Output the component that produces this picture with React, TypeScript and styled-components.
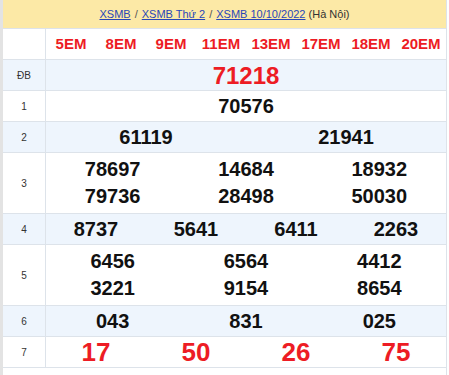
import styled, { createGlobalStyle } from 'styled-components';

const GlobalStyle = createGlobalStyle`
    html, body {
        margin: 0;
        padding: 0;
        background: #fff;
    }
    body {
        font-family: "Liberation Sans", Arial, sans-serif;
    }
`;

const Frame = styled.div`
    width: 443px;
    height: 375px;
    border-left: 3px solid #e3e3e3;
    border-right: 1px solid #dde3ea;
    background: #fff;
`;

const Crumbs = styled.div`
    height: 28px;
    background: #fce9a6;
    display: flex;
    align-items: center;
    justify-content: center;
    font-size: 11px;
    color: #333;
    gap: 4px;
`;

const CrumbLink = styled.a`
    color: #2946b8;
    text-decoration: underline;
`;

const Sep = styled.span`
    color: #555;
`;

const Row = styled.div<{ $alt?: boolean; $tall?: boolean }>`
    display: grid;
    grid-template-columns: 43px 1fr;
    height: ${(p) => (p.$tall ? 60 : 30)}px;
    border-top: 1px solid #dde3ea;
    background: ${(p) => (p.$alt ? '#eef5fd' : '#fff')};
    &:last-child {
        border-bottom: 1px solid #dde3ea;
    }
`;

const Label = styled.div`
    border-right: 1px solid #dde3ea;
    display: flex;
    align-items: center;
    justify-content: center;
    font-size: 10px;
    color: #333;
`;

const Cells = styled.div<{ $cols: number }>`
    display: grid;
    grid-template-columns: repeat(${(p) => p.$cols}, 1fr);
    align-content: center;
`;

const Head = styled.div`
    text-align: center;
    color: #ed1c24;
    font-weight: bold;
    font-size: 15px;
    line-height: 30px;
`;

const Num = styled.div<{ $red?: boolean; $size?: number }>`
    text-align: center;
    font-weight: bold;
    color: ${(p) => (p.$red ? '#ed1c24' : '#111')};
    font-size: ${(p) => p.$size ?? 20}px;
    line-height: 27px;
`;

const heads = ['5EM', '8EM', '9EM', '11EM', '13EM', '17EM', '18EM', '20EM'];

const prizes: { label: string; cols: number; nums: string[]; red?: boolean; size?: number }[] = [
    { label: 'ĐB', cols: 1, nums: ['71218'], red: true, size: 24 },
    { label: '1', cols: 1, nums: ['70576'] },
    { label: '2', cols: 2, nums: ['61119', '21941'] },
    { label: '3', cols: 3, nums: ['78697', '14684', '18932', '79736', '28498', '50030'] },
    { label: '4', cols: 4, nums: ['8737', '5641', '6411', '2263'] },
    { label: '5', cols: 3, nums: ['6456', '6564', '4412', '3221', '9154', '8654'] },
    { label: '6', cols: 3, nums: ['043', '831', '025'] },
    { label: '7', cols: 4, nums: ['17', '50', '26', '75'], red: true, size: 26 },
];

export default function App() {
    return (
        <Frame>
            <GlobalStyle />
            <Crumbs>
                <CrumbLink>XSMB</CrumbLink>
                <Sep>/</Sep>
                <CrumbLink>XSMB Thứ 2</CrumbLink>
                <Sep>/</Sep>
                <span>
                    <CrumbLink>XSMB 10/10/2022</CrumbLink> (Hà Nội)
                </span>
            </Crumbs>
            <div>
                <Row>
                    <Label />
                    <Cells $cols={8}>
                        {heads.map((h) => (
                            <Head key={h}>{h}</Head>
                        ))}
                    </Cells>
                </Row>
                {prizes.map((p, i) => (
                    <Row key={p.label} $alt={i % 2 === 0} $tall={p.nums.length > p.cols}>
                        <Label>{p.label}</Label>
                        <Cells $cols={p.cols}>
                            {p.nums.map((n, j) => (
                                <Num key={j} $red={p.red} $size={p.size}>
                                    {n}
                                </Num>
                            ))}
                        </Cells>
                    </Row>
                ))}
            </div>
        </Frame>
    );
}
